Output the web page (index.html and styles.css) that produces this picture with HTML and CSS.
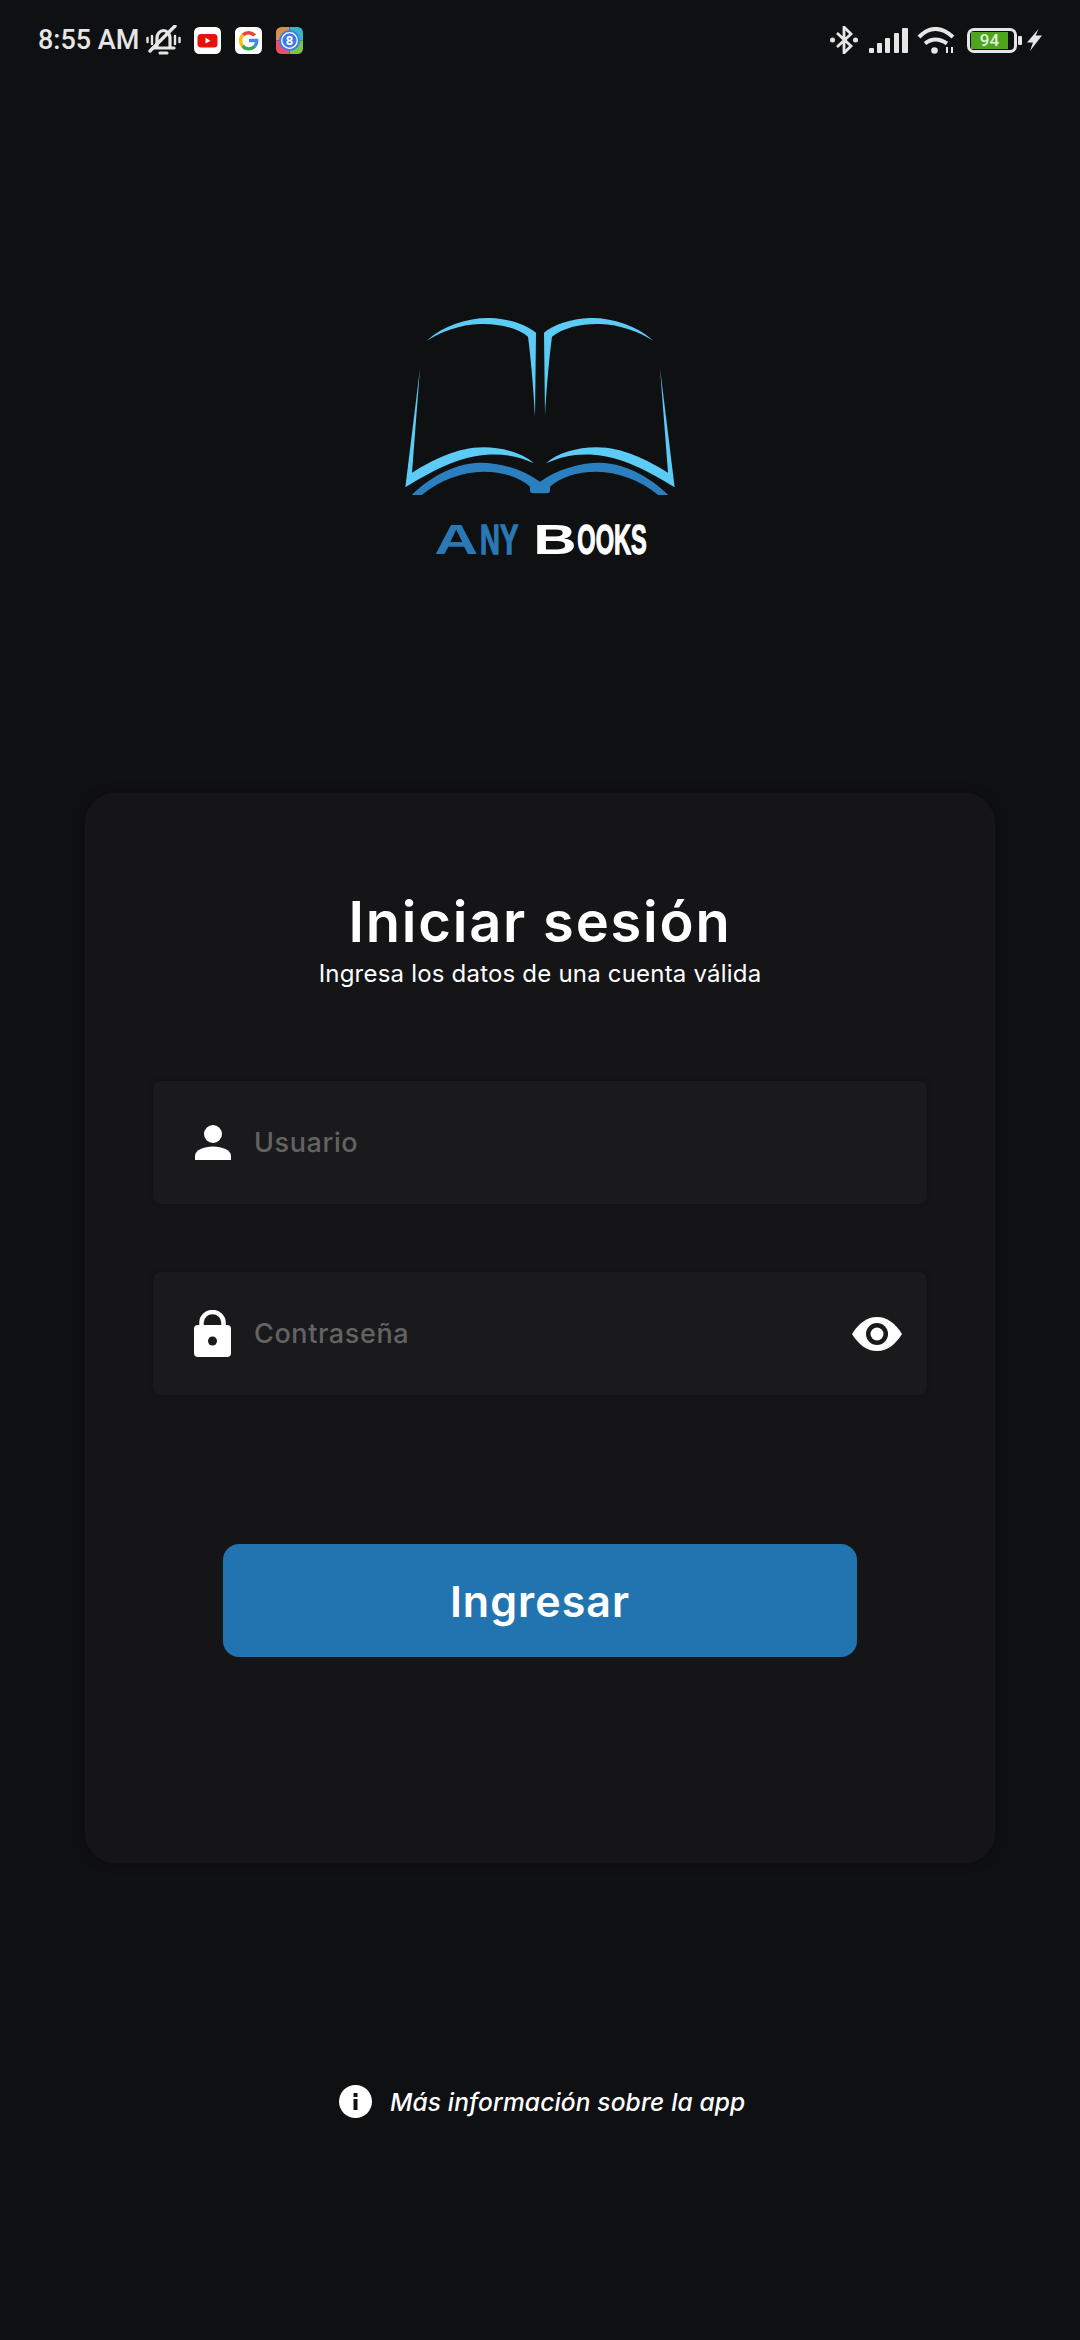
FILE: index.html
```html
<!DOCTYPE html>
<html lang="es">
<head>
  <meta charset="UTF-8" />
  <meta name="viewport" content="width=device-width, initial-scale=1" />
  <title>Any Books</title>
  <link rel="stylesheet" href="styles.css">
</head>
<body>
  <header class="status-bar">
    <div class="status-left">
      <span class="status-time">8:55 AM</span>
      <svg class="ic-bell" viewBox="0 0 35 30" fill="none" stroke="#e6e6e6" stroke-width="3.200" stroke-linecap="round">
        <path d="M7 23h21M11 22v-9a6.500 7.500 0 0 1 13 0v9"/>
        <path d="M14 28h7"/>
        <path d="M4 26 29 1" stroke-width="3.400"/>
        <path d="M6 11v8M1.500 13v4M29 11v8M33.500 13v4" stroke-width="2.400"/>
      </svg>
      <svg class="ic-app ic-yt" viewBox="0 0 27 27">
        <rect width="27" height="27" rx="5.500" fill="#fff"/>
        <rect x="3.500" y="7" width="20" height="13.500" rx="3.500" fill="#e8120c"/>
        <path d="M11.500 10.800v5.800l5-2.900z" fill="#fff"/>
      </svg>
      <svg class="ic-app ic-g" viewBox="0 0 27 27" fill="none" stroke-width="3.400">
        <rect width="27" height="27" rx="5.500" fill="#fff" stroke="none"/>
        <path d="M19.700 8.500a8.200 8.200 0 0 0-11.800-.6" stroke="#ea4335"/>
        <path d="M7.900 7.900a8.200 8.200 0 0 0-.4 11" stroke="#fbbc05"/>
        <path d="M7.500 18.900a8.200 8.200 0 0 0 12.400.3" stroke="#34a853"/>
        <path d="M19.900 19.200a8.200 8.200 0 0 0 1.800-5.700H14" stroke="#4285f4"/>
      </svg>
      <svg class="ic-app ic-eight" viewBox="0 0 27 27">
        <defs>
          <clipPath id="eight-clip"><rect width="27" height="27" rx="5.500"/></clipPath>
        </defs>
        <g clip-path="url(#eight-clip)">
          <rect width="13.500" height="13.500" fill="#d9914a"/>
          <rect x="13.500" width="13.500" height="13.500" fill="#36b4c8"/>
          <rect x="13.500" y="13.500" width="13.500" height="13.500" fill="#7cc24e"/>
          <rect y="13.500" width="13.500" height="13.500" fill="#e8506a"/>
        </g>
        <circle cx="13.500" cy="13.500" r="10.500" fill="#3d7be8"/>
        <circle cx="13.500" cy="13.500" r="7.800" fill="none" stroke="#fff" stroke-width="1.300"/>
        <text class="eight-num" x="13.500" y="18" text-anchor="middle">8</text>
      </svg>
    </div>
    <div class="status-right">
      <svg class="ic-bt" viewBox="0 0 28 28" fill="none" stroke="#e6e6e6" stroke-width="2.800">
        <path d="M7 7 21 20l-7 7V1l7 7L7 21"/>
        <circle cx="2.500" cy="14" r="2.500" fill="#e6e6e6" stroke="none"/>
        <circle cx="25.500" cy="14" r="2.500" fill="#e6e6e6" stroke="none"/>
      </svg>
      <svg class="ic-signal" viewBox="0 0 39 25" fill="#e6e6e6">
        <rect x="0" y="20" width="5" height="5" rx="1"/>
        <rect x="8" y="15" width="5" height="10" rx="1"/>
        <rect x="16" y="10" width="5" height="15" rx="1"/>
        <rect x="25" y="5" width="5" height="20" rx="1"/>
        <rect x="33" y="0" width="6" height="25" rx="1"/>
      </svg>
      <svg class="ic-wifi" viewBox="0 0 38 27" fill="none" stroke="#e6e6e6" stroke-width="4">
        <path d="M2 10Q18-6 36 10"/>
        <path d="M8 16.500q10-8 22 0"/>
        <circle cx="17.500" cy="23.500" r="3.300" fill="#e6e6e6" stroke="none"/>
        <path d="M30 26v-6M35 20v6" stroke-width="2"/>
      </svg>
      <div class="battery">
        <div class="battery-body"><span class="battery-level">94</span></div>
        <div class="battery-nub"></div>
      </div>
      <svg class="ic-bolt" viewBox="0 0 15 22" fill="#e6e6e6">
        <path d="M11.500 0 0 13.500h6L3 22 15 6.500H8.700z"/>
      </svg>
    </div>
  </header>

  <div class="logo">
    <svg viewBox="0 0 960 840">
      <g fill="#5ccbf6">
        <g>
          <path d="M140 152C190 105 270 82 330 84 390 86 440 105 468 128L465 380C461 300 452 200 444 140 410 112 350 100 300 102 240 104 185 125 140 152Z"/>
          <path d="M120 235 76 592C150 545 240 498 320 494 370 490 420 500 462 520 430 490 370 472 310 472 230 472 160 510 96 548Z"/>
        </g>
        <g transform="matrix(-1 0 0 1 960 0)">
          <path d="M140 152C190 105 270 82 330 84 390 86 440 105 468 128L465 380C461 300 452 200 444 140 410 112 350 100 300 102 240 104 185 125 140 152Z"/>
          <path d="M120 235 76 592C150 545 240 498 320 494 370 490 420 500 462 520 430 490 370 472 310 472 230 472 160 510 96 548Z"/>
        </g>
      </g>
      <path fill="#2c7fbf" d="M95 615C150 560 230 518 300 518 365 518 430 540 480 575 530 540 595 518 660 518 730 518 810 560 865 615H835C780 570 710 545 650 545 590 545 540 562 510 590V600Q510 610 500 610H460Q450 610 450 600V590C420 562 370 545 310 545 250 545 180 570 125 615Z"/>
      <g class="logo-word">
        <text class="logo-blue" x="163" y="792" textLength="132" lengthAdjust="spacingAndGlyphs">A</text>
        <text class="logo-blue logo-narrow" x="300" y="792" textLength="115" lengthAdjust="spacingAndGlyphs">NY</text>
        <text class="logo-white" x="460" y="792" textLength="130" lengthAdjust="spacingAndGlyphs">B</text>
        <text class="logo-white logo-narrow" x="592" y="792" textLength="208" lengthAdjust="spacingAndGlyphs">OOKS</text>
      </g>
    </svg>
  </div>

  <main class="card">
    <h1 class="card-title">Iniciar sesión</h1>
    <p class="card-sub">Ingresa los datos de una cuenta válida</p>

    <div class="field">
      <svg class="ic-person" viewBox="0 0 36 35" fill="#fff">
        <circle cx="18" cy="9" r="9"/>
        <path d="M0 35v-4C0 25 9 21.500 18 21.500S36 25 36 31v4Z"/>
      </svg>
      <span class="field-text">Usuario</span>
    </div>

    <div class="field field-pass">
      <svg class="ic-lock" viewBox="0 0 37 47">
        <path d="M7.500 17V12.500a11 10.500 0 0 1 22 0V17" fill="none" stroke="#fff" stroke-width="4.500"/>
        <rect y="15" width="37" height="32" rx="4" fill="#fff"/>
        <circle cx="18.500" cy="31" r="4.500" fill="#1a1a1c"/>
      </svg>
      <span class="field-text">Contraseña</span>
      <svg class="ic-eye" viewBox="0 0 50 34">
        <path d="M0 17C7 6 15 0 25 0S43 6 50 17C43 28 35 34 25 34S7 28 0 17Z" fill="#fff"/>
        <circle cx="25" cy="17" r="11" fill="#1a1a1c"/>
        <circle cx="25" cy="17" r="6.500" fill="#fff"/>
      </svg>
    </div>

    <div class="login-btn">Ingresar</div>
  </main>

  <footer class="more-info">
    <svg class="ic-info" viewBox="0 0 33 33">
      <circle cx="16.500" cy="16.500" r="16.500" fill="#fff"/>
      <rect x="14.500" y="14" width="4" height="11" fill="#111"/>
      <rect x="14.500" y="8" width="4" height="4" fill="#111"/>
    </svg>
    <span class="more-text">Más información sobre la app</span>
  </footer>
</body>
</html>
```

FILE: styles.css
```css
* {
  box-sizing: border-box;
}
body {
  background: #0f1011;
  color: #fff;
  margin: 0;
  width: 1080px;
  height: 2340px;
  overflow: hidden;
  font-family: Inter, "Noto Sans", sans-serif;
}
svg {
  display: block;
  flex: none;
}

/* status bar */
.status-bar {
  height: 80px;
  padding: 0 38px;
  display: flex;
  justify-content: space-between;
  align-items: center;
}
.status-left,
.status-right {
  display: flex;
  align-items: center;
}
.status-time {
  font-family: Roboto, sans-serif;
  font-size: 27px;
  font-weight: 500;
  color: #e6e6e6;
  width: 99px;
  white-space: nowrap;
}
.ic-bell {
  width: 35px;
  height: 30px;
  margin-left: 9px;
}
.ic-app {
  width: 27px;
  height: 27px;
}
.ic-yt {
  margin-left: 13px;
}
.ic-g,
.ic-eight {
  margin-left: 14px;
}
.eight-num {
  font-family: Roboto, sans-serif;
  font-size: 13px;
  font-weight: 700;
  fill: #fff;
}
.ic-bt {
  width: 28px;
  height: 28px;
}
.ic-signal {
  width: 39px;
  height: 25px;
  margin-left: 11px;
  margin-top: 1px;
}
.ic-wifi {
  width: 38px;
  height: 27px;
  margin-left: 9px;
}
.battery {
  display: flex;
  align-items: center;
  margin-left: 12px;
}
.battery-body {
  width: 50px;
  height: 25px;
  border: 3px solid #e6e6e6;
  border-radius: 7px;
  padding: 1px;
}
.battery-level {
  display: block;
  width: 37px;
  height: 17px;
  background: #4fa51f;
  color: #dff2d2;
  font-family: Roboto, sans-serif;
  font-size: 17px;
  font-weight: 500;
  line-height: 17px;
  text-align: center;
}
.battery-nub {
  width: 4px;
  height: 9px;
  margin-left: 1px;
  background: #e6e6e6;
  border-radius: 1px;
}
.ic-bolt {
  width: 15px;
  height: 22px;
  margin-left: 5px;
}

/* logo */
.logo {
  width: 320px;
  height: 280px;
  margin: 210px auto 0;
}
.logo-word text {
  font-family: "Liberation Sans", sans-serif;
  font-size: 125px;
  font-weight: 700;
}
.logo-blue {
  fill: #2a78b5;
}
.logo-white {
  fill: #fff;
}
.logo-word .logo-narrow {
  stroke-width: 4px;
}
.logo-word .logo-blue.logo-narrow {
  stroke: #2a78b5;
}
.logo-word .logo-white.logo-narrow {
  stroke: #fff;
}

/* login card */
.card {
  width: 910px;
  height: 1070px;
  margin: 223px auto 0;
  padding-top: 99px;
  background: #151517;
  border-radius: 30px;
  box-shadow: 0 0 12px rgba(0, 0, 0, 0.25);
  display: flex;
  flex-direction: column;
  align-items: center;
}
.card-title {
  margin: 0;
  font-size: 56px;
  font-weight: 600;
  line-height: 60px;
  letter-spacing: 1.8px;
}
.card-sub {
  margin: 6px 0 91px;
  font-size: 24px;
  line-height: 32px;
  letter-spacing: 0.2px;
}
.field {
  width: 774px;
  height: 123px;
  padding: 0 25px 0 41px;
  margin-bottom: 68px;
  background: #1a1a1c;
  border-radius: 8px;
  box-shadow: 0 0 4px rgba(0, 0, 0, 0.3);
  display: flex;
  align-items: center;
}
.field-pass {
  margin-bottom: 149px;
}
.field-text {
  flex: 1;
  margin-left: 23px;
  font-size: 27px;
  font-weight: 500;
  letter-spacing: 0.6px;
  color: #636363;
}
.ic-person {
  width: 36px;
  height: 35px;
  margin-left: 1px;
}
.ic-lock {
  width: 37px;
  height: 47px;
}
.ic-eye {
  width: 50px;
  height: 34px;
}
.login-btn {
  width: 634px;
  height: 113px;
  background: #2274b0;
  border-radius: 16px;
  font-size: 43px;
  font-weight: 600;
  letter-spacing: 1px;
  display: flex;
  justify-content: center;
  align-items: center;
}

/* footer link */
.more-info {
  margin-top: 222px;
  padding-left: 339px;
  display: flex;
  align-items: center;
}
.ic-info {
  width: 33px;
  height: 33px;
}
.more-text {
  margin-left: 18px;
  font-size: 24.500px;
  font-style: italic;
  font-weight: 500;
  letter-spacing: 0.15px;
  white-space: nowrap;
}
```
